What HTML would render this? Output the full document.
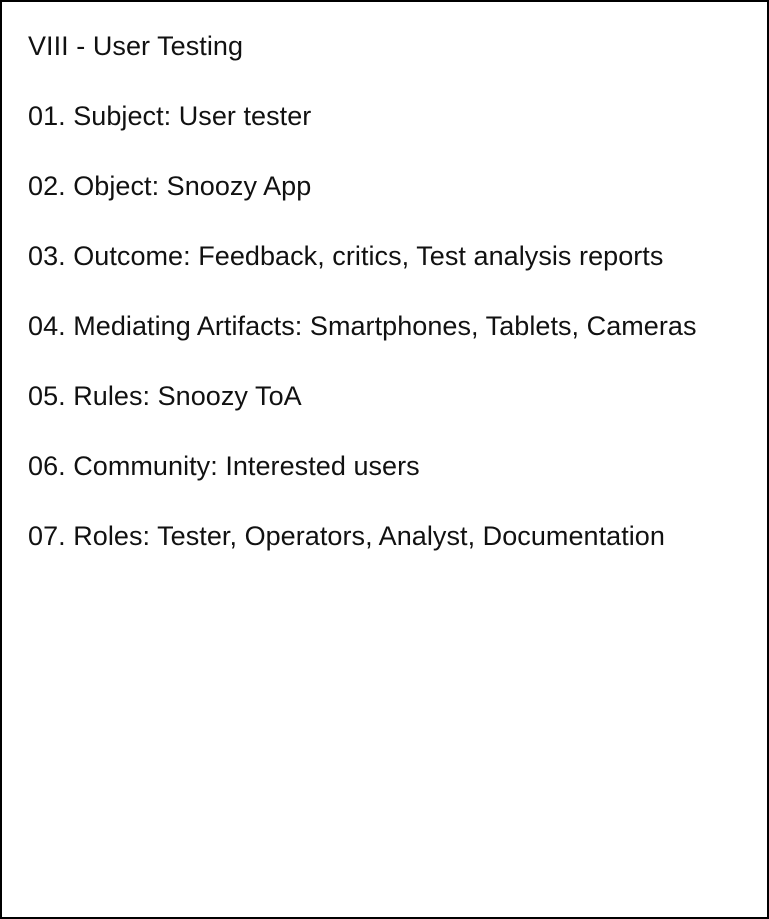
<!DOCTYPE html>
<html><head><style>
html,body{margin:0;padding:0;background:#fff;}
.box{position:absolute;left:0;top:0;width:765px;height:915px;border:2px solid #000;}
p{position:absolute;left:28px;margin:0;font-family:"Liberation Sans",sans-serif;font-size:27px;letter-spacing:0.05px;color:#111;line-height:30px;white-space:nowrap;}
</style></head><body>
<div class="box"></div>
<p style="top:31px">VIII - User Testing</p>
<p style="top:101px">01. Subject: User tester</p>
<p style="top:171px">02. Object: Snoozy App</p>
<p style="top:241px">03. Outcome: Feedback, critics, Test analysis reports</p>
<p style="top:311px">04. Mediating Artifacts: Smartphones, Tablets, Cameras</p>
<p style="top:381px">05. Rules: Snoozy ToA</p>
<p style="top:451px">06. Community: Interested users</p>
<p style="top:521px">07. Roles: Tester, Operators, Analyst, Documentation</p>
</body></html>
